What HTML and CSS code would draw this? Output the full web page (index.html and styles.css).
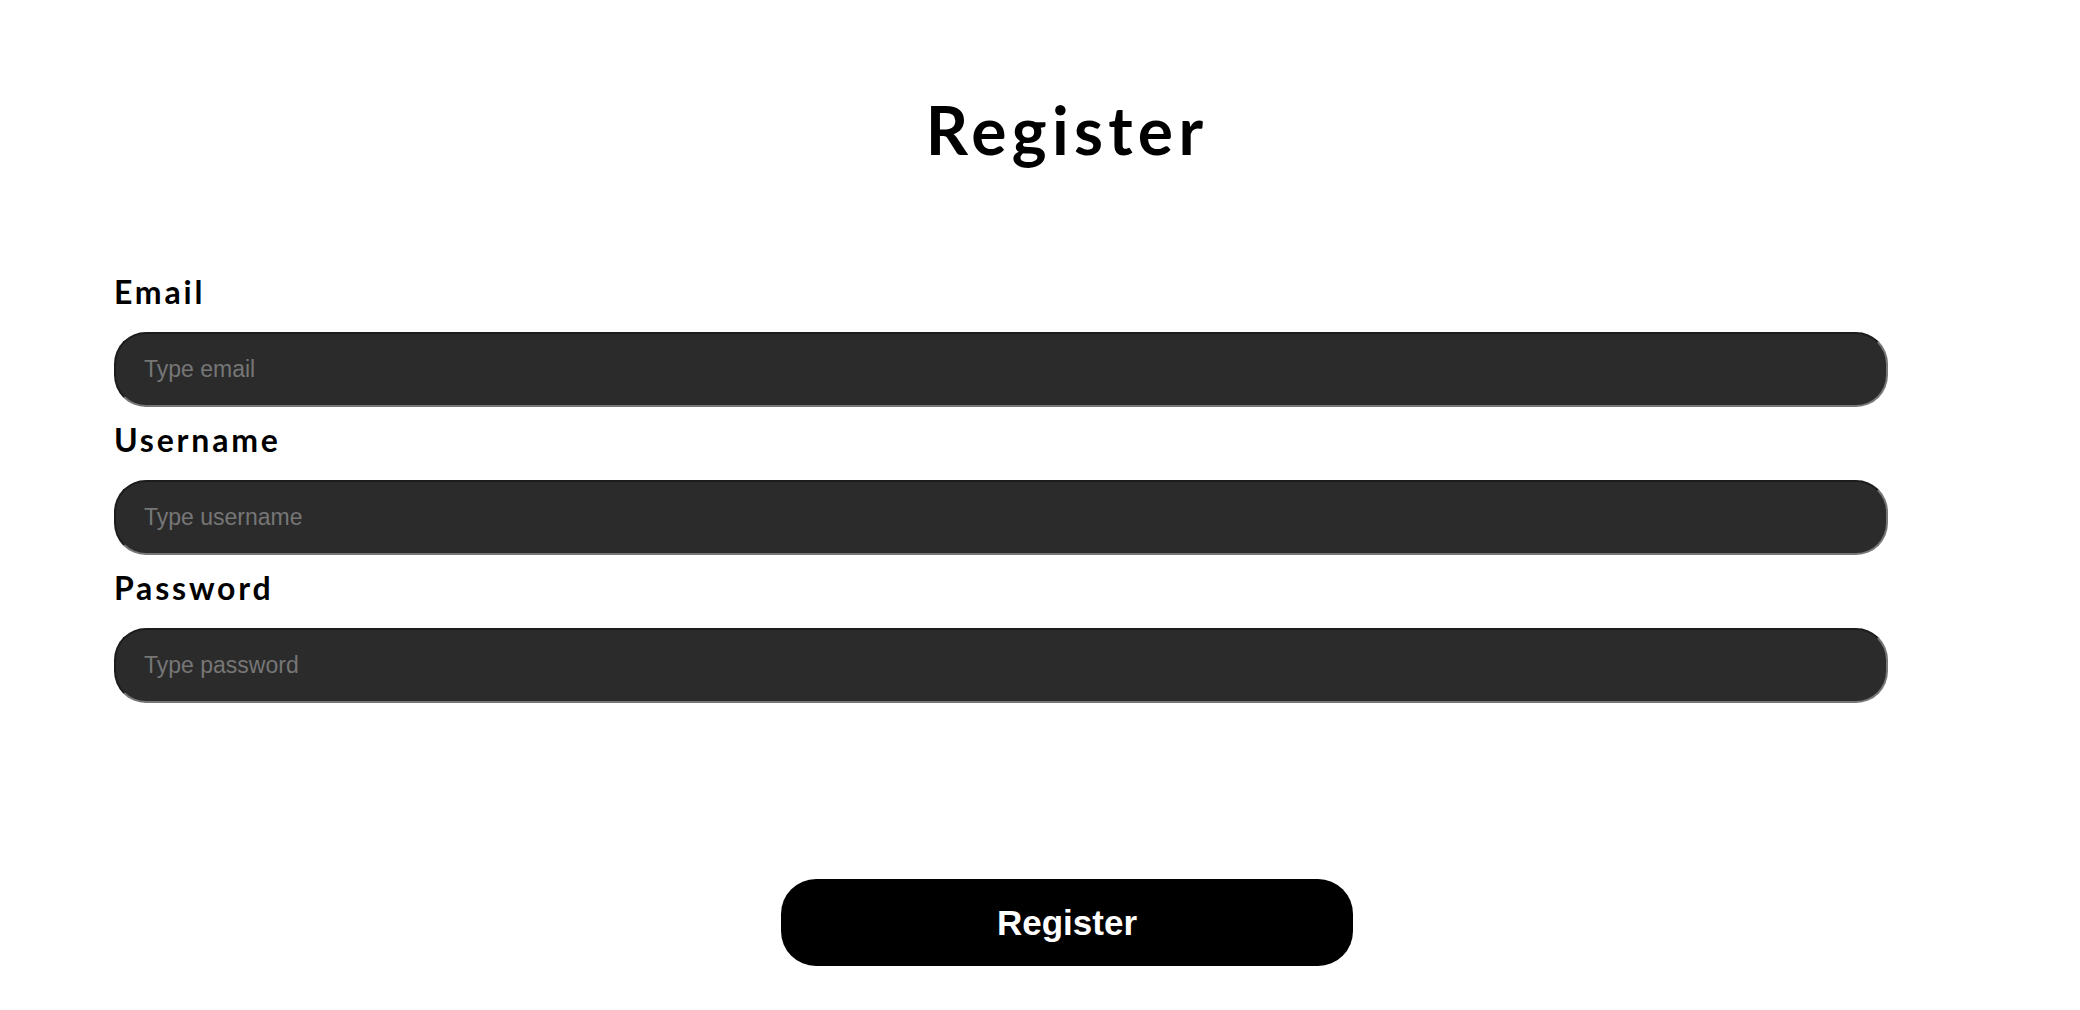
FILE: index.html
```html
<!DOCTYPE html>
<html lang="en">
<head>
<meta charset="utf-8">
<title>Register</title>
<link rel="stylesheet" href="styles.css">
</head>
<body>
<main class="page">
  <h1 class="title">Register</h1>
  <form class="form">
    <div class="field">
      <label class="label" for="email">Email</label>
      <input class="input" id="email" type="email" placeholder="Type email">
    </div>
    <div class="field">
      <label class="label" for="username">Username</label>
      <input class="input" id="username" type="text" placeholder="Type username">
    </div>
    <div class="field">
      <label class="label" for="password">Password</label>
      <input class="input" id="password" type="password" placeholder="Type password">
    </div>
    <div class="actions">
      <button class="btn" type="button">Register</button>
    </div>
  </form>
</main>
</body>
</html>
```

FILE: styles.css
```css
* { box-sizing: border-box; }

body {
  margin: 0;
  background: #ffffff;
  color: #000000;
  font-family: "Lato", "Open Sans", sans-serif;
}

.page {
  padding: 97px 60px 0 114px;
}

.title {
  margin: 0;
  text-align: center;
  font-family: "Lato", sans-serif;
  font-weight: 700;
  font-size: 66px;
  line-height: 66px;
  letter-spacing: 5.3px;
}

.form {
  margin-top: 113px;
  display: flex;
  flex-direction: column;
}

.field {
  display: flex;
  flex-direction: column;
  align-items: flex-start;
  padding-bottom: 17px;
}

.label {
  font-family: "Lato", sans-serif;
  font-weight: 700;
  font-size: 32px;
  line-height: 32px;
  letter-spacing: 2.8px;
  margin-bottom: 24px;
}

.input {
  width: 1774px;
  height: 75px;
  padding: 0 28px;
  background: #2b2b2b;
  color: #ffffff;
  border: 2px solid;
  border-color: #1c1c1c #767676 #767676 #1c1c1c;
  border-radius: 32px;
  font-family: "Liberation Sans", Arial, sans-serif;
  font-size: 23px;
  outline: none;
}

.input::placeholder {
  color: #767676;
  opacity: 1;
}

.actions {
  display: flex;
  justify-content: center;
  margin-top: 159px;
}

.btn {
  width: 572px;
  height: 87px;
  border: none;
  border-radius: 35px;
  background: #000000;
  color: #ffffff;
  font-family: "Liberation Sans", Arial, sans-serif;
  font-weight: 700;
  font-size: 35px;
  cursor: pointer;
}
```
